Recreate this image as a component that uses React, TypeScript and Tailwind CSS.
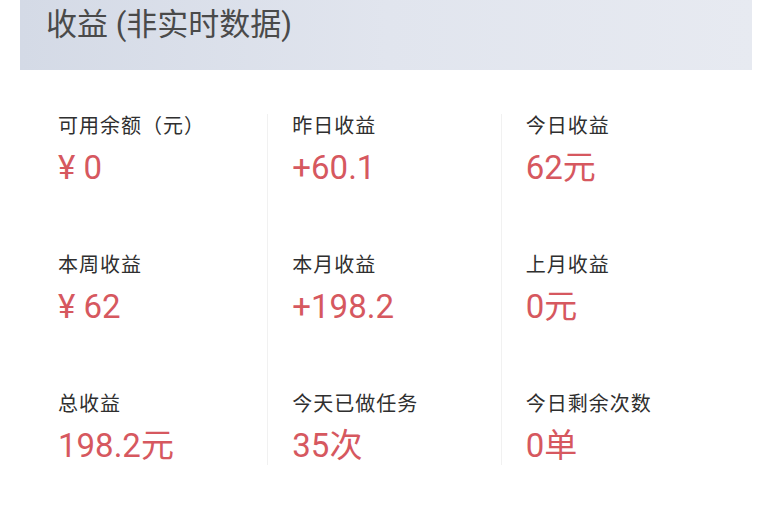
import React from 'react';

interface Stat {
  label: string;
  value: string;
}

const columns: Stat[][] = [
  [
    { label: '可用余额（元）', value: '¥ 0' },
    { label: '本周收益', value: '¥ 62' },
    { label: '总收益', value: '198.2元' },
  ],
  [
    { label: '昨日收益', value: '+60.1' },
    { label: '本月收益', value: '+198.2' },
    { label: '今天已做任务', value: '35次' },
  ],
  [
    { label: '今日收益', value: '62元' },
    { label: '上月收益', value: '0元' },
    { label: '今日剩余次数', value: '0单' },
  ],
];

const font = { fontFamily: "Roboto, 'Noto Sans CJK SC', sans-serif" };

export default function App() {
  return (
    <div className="w-[768px] h-[510px] bg-white overflow-hidden" style={font}>
      <div className="ml-[20px] mr-[16px] h-[70px] bg-gradient-to-r from-[#d4dae6] via-[#e1e5ee] to-[#e7eaf1] pl-[26px] pt-[5px]">
        <h1 className="text-[31px] leading-[40px] text-[#4a4a4a]">收益 (非实时数据)</h1>
      </div>
      <div className="mx-[34px] mt-[44px] grid grid-cols-3">
        {columns.map((col, i) => (
          <div
            key={i}
            className={`flex flex-col gap-[66px] pl-[24px] ${i > 0 ? 'border-l border-[#f1f1f1]' : ''}`}
          >
            {col.map((s) => (
              <div key={s.label} className="flex flex-col gap-[11px]">
                <p className="text-[20px] leading-[24px] tracking-[1px] text-[#2f2f2f]">{s.label}</p>
                <p className="text-[33px] leading-[38px] text-[#d6585f]">{s.value}</p>
              </div>
            ))}
          </div>
        ))}
      </div>
    </div>
  );
}
